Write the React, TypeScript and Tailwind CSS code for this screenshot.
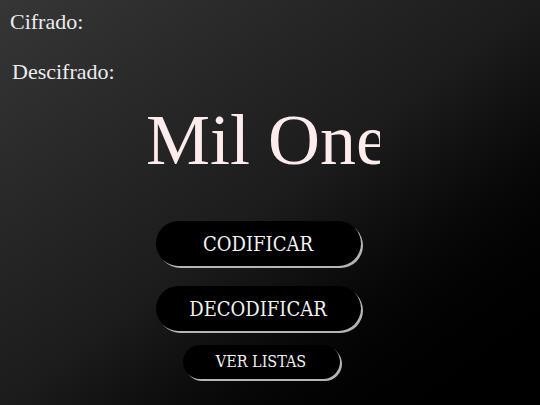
export default function App() {
  return (
    <div className="h-[405px] w-[540px] overflow-hidden bg-gradient-to-br from-[#363636] via-[#1c1c1c] to-[#000000] font-['Liberation_Serif',serif]">
      {/* Labels */}
      <div className="pl-[10px] pt-[8px] text-[22px] leading-[28px] text-[#ececec]">Cifrado:</div>
      <div className="pl-[12px] pt-[22px] text-[22px] leading-[28px] text-[#ececec]">Descifrado:</div>

      {/* Title */}
      <div className="ml-[146px] mt-[14px] w-[234px] overflow-hidden whitespace-nowrap font-['Liberation_Serif',serif] text-[72px] leading-[80px] text-[#fdeceb]">
        Mil One
      </div>

      {/* Actions */}
      <div className="mt-[41px] flex flex-col items-center pr-[24px] font-['DejaVu_Serif_Condensed','DejaVu_Serif',serif] font-stretch-condensed text-[#f2f2f2]">
        <button className="flex h-[45px] w-[205px] items-center justify-center rounded-full bg-black text-[20px] shadow-[2px_2px_0_#b5b5b5]">
          CODIFICAR
        </button>
        <button className="mt-[20px] flex h-[45px] w-[205px] items-center justify-center rounded-full bg-black text-[20px] shadow-[2px_2px_0_#b5b5b5]">
          DECODIFICAR
        </button>
        <button className="ml-[6px] mt-[14px] flex h-[34px] w-[157px] items-center justify-center rounded-full bg-black text-[16px] shadow-[2px_2px_0_#b5b5b5]">
          VER LISTAS
        </button>
      </div>
    </div>
  );
}
